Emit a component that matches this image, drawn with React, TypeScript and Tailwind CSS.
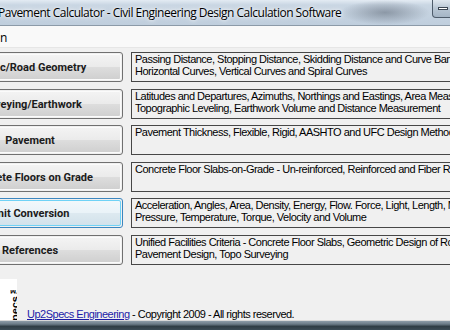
import React from "react";

type Row = { label: string; lines: string[]; active?: boolean };

const rows: Row[] = [
  {
    label: "Traffic/Road Geometry",
    lines: [
      "Passing Distance, Stopping Distance, Skidding Distance and Curve Banking,",
      "Horizontal Curves, Vertical Curves and Spiral Curves",
    ],
  },
  {
    label: "Surveying/Earthwork",
    lines: [
      "Latitudes and Departures, Azimuths, Northings and Eastings, Area Measurement,",
      "Topographic Leveling, Earthwork Volume and Distance Measurement",
    ],
  },
  {
    label: "Pavement",
    lines: ["Pavement Thickness, Flexible, Rigid, AASHTO and UFC Design Methods"],
  },
  {
    label: "Concrete Floors on Grade",
    lines: ["Concrete Floor Slabs-on-Grade - Un-reinforced, Reinforced and Fiber Reinforced"],
  },
  {
    label: "Unit Conversion",
    lines: [
      "Acceleration, Angles, Area, Density, Energy, Flow. Force, Light, Length, Mass,",
      "Pressure, Temperature, Torque, Velocity and Volume",
    ],
    active: true,
  },
  {
    label: "References",
    lines: [
      "Unified Facilities Criteria - Concrete Floor Slabs, Geometric Design of Roads,",
      "Pavement Design, Topo Surveying",
    ],
  },
];

function WinButton({ label, active }: { label: string; active?: boolean }) {
  return (
    <div
      className={
        "shrink-0 -ml-[63px] w-[186px] h-[30px] rounded-[3px] border p-px " +
        (active ? "border-[#3c86bf]" : "border-[#707070]")
      }
    >
      <div
        className={
          "w-full h-full rounded-[2px] border flex items-center justify-center " +
          (active
            ? "border-[#6fd2f6] bg-[linear-gradient(to_bottom,#f2f8fb_0%,#eaf3f8_48%,#dde9f0_52%,#d2e2eb_100%)]"
            : "border-[#fbfbfb] bg-[linear-gradient(to_bottom,#f3f3f3_0%,#ebebeb_48%,#dddddd_52%,#d0d0d0_100%)]")
        }
      >
        <span className="font-['Roboto',sans-serif] font-bold text-[11px] text-[#1b1b1b] whitespace-nowrap leading-none pt-px">
          {label}
        </span>
      </div>
    </div>
  );
}

export default function App() {
  return (
    <div className="w-[450px] h-[330px] overflow-hidden bg-[#f0f0f0] flex flex-col font-['Liberation_Sans',Arial,sans-serif]">
      {/* Title bar */}
      <div className="relative h-[26px] shrink-0 border-b border-[#8c9aa8] bg-[linear-gradient(to_bottom,#e3ebf3_0%,#c9d6e3_20%,#bfcedd_100%)] flex items-center overflow-hidden">
        <div className="absolute right-[20px] top-0 w-[90px] h-[25px] bg-[radial-gradient(ellipse_at_center,rgba(70,80,95,0.45),rgba(70,80,95,0)_70%)]" />
        <span className="relative -ml-[2px] font-['Open_Sans',sans-serif] text-[12px] tracking-[-0.5px] text-black whitespace-nowrap [text-shadow:0_0_6px_#ffffff,0_0_3px_#ffffff]">
          Pavement Calculator - Civil Engineering Design Calculation Software
        </span>
        <div className="absolute left-[432px] top-0 w-[30px] h-[18px] rounded-bl-[4px] border border-t-0 border-[#4e5c6b] bg-[linear-gradient(to_bottom,#dfe7ef,#b7c5d3_50%,#a5b5c5)] flex items-center pl-[5px]">
          <div className="w-[10px] h-[3px] bg-white border border-[#3c4754]" />
        </div>
      </div>

      {/* Menu strip */}
      <div className="h-[22px] shrink-0 bg-[#f9f9f9] flex items-center border-b border-[#e6e6e6]">
        <span className="text-[12px] text-black pt-[3px] font-['Open_Sans',sans-serif] leading-none">n</span>
      </div>

      {/* Content */}
      <div className="h-[272px] shrink-0 flex flex-col pt-[4px]">
        <div className="flex flex-col gap-[6.5px]">
          {rows.map((r) => (
            <div key={r.label} className="flex h-[30px] gap-[8px]">
              <WinButton label={r.label} active={r.active} />
              <div className="shrink-0 w-[400px] h-[30px] border border-[#474747] bg-[#f0f0f0] pl-[3px] text-[11px] tracking-[-0.5px] leading-[12px] text-black overflow-hidden">
                {r.lines.map((l) => (
                  <div key={l} className="whitespace-nowrap">
                    {l}
                  </div>
                ))}
              </div>
            </div>
          ))}
        </div>

        {/* Footer */}
        <div className="flex-1 flex items-end">
          <div className="w-[17px] h-[41px] bg-white overflow-hidden flex items-start justify-end">
            <span className="mt-[5px] -mr-[4px] [writing-mode:vertical-rl] rotate-180 font-['Liberation_Sans',sans-serif] font-bold text-[11px] leading-[12px] text-black whitespace-nowrap">
              Up2Specs™
            </span>
          </div>
          <div className="ml-[10px] mb-0 text-[11px] tracking-[-0.5px] leading-[12px] text-black whitespace-nowrap">
            <span className="text-[#1c1ca8] underline">Up2Specs Engineering</span> - Copyright 2009 - All rights reserved.
          </div>
        </div>
      </div>

      {/* Bottom frame */}
      <div className="h-[10px] shrink-0 border-t border-[#d8d8d8] bg-[linear-gradient(to_bottom,#8d9ca8_0%,#6a7a86_35%,#2f3d45_60%,#3c4c56_100%)]" />
    </div>
  );
}
